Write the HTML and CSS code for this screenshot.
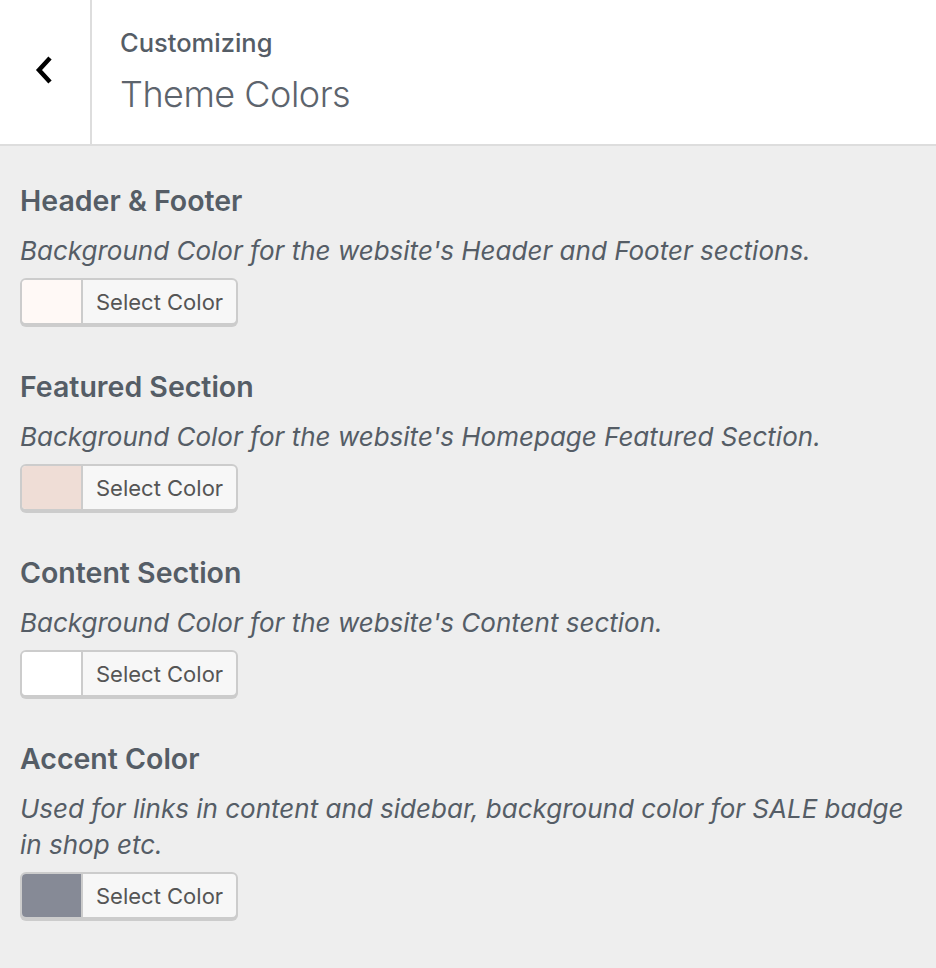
FILE: index.html
```html
<!DOCTYPE html>
<html lang="en">
<head>
  <meta charset="UTF-8" />
  <title>Customizing - Theme Colors</title>
  <link rel="stylesheet" href="styles.css">
</head>
<body>

<header class="panel-head">
  <button class="back" aria-label="Back">
    <svg width="20" height="30" viewBox="0 0 20 30"><path d="M16 3 L5 15 L16 27" fill="none" stroke="#000" stroke-width="4.5"/></svg>
  </button>
  <div class="panel-title">
    <span class="crumb">Customizing</span>
    <h1>Theme Colors</h1>
  </div>
</header>

<main class="panel-body">
  <div class="control">
    <h2>Header &amp; Footer</h2>
    <p class="desc">Background Color for the website's Header and Footer sections.</p>
    <button class="color-result"><span class="swatch" style="background:#fff9f6"></span><span class="label">Select Color</span></button>
  </div>

  <div class="control">
    <h2>Featured Section</h2>
    <p class="desc">Background Color for the website's Homepage Featured Section.</p>
    <button class="color-result"><span class="swatch" style="background:#efddd6"></span><span class="label">Select Color</span></button>
  </div>

  <div class="control">
    <h2>Content Section</h2>
    <p class="desc">Background Color for the website's Content section.</p>
    <button class="color-result"><span class="swatch" style="background:#ffffff"></span><span class="label">Select Color</span></button>
  </div>

  <div class="control">
    <h2>Accent Color</h2>
    <p class="desc">Used for links in content and sidebar, background color for SALE badge in shop etc.</p>
    <button class="color-result"><span class="swatch" style="background:#868a96"></span><span class="label">Select Color</span></button>
  </div>
</main>

</body>
</html>
```

FILE: styles.css
```css
* {
  box-sizing: border-box;
}

body {
  margin: 0;
  background: #eee;
  color: #555d66;
  font-family: Inter, "Noto Sans", sans-serif;
}

/* Cabecera */
.panel-head {
  display: flex;
  height: 146px;
  background: #fff;
  border-bottom: 2px solid #ddd;
}

.back {
  width: 92px;
  border: none;
  border-right: 2px solid #ddd;
  background: #fff;
  display: flex;
  align-items: center;
  justify-content: center;
  padding: 0 2px 4px 0;
  cursor: pointer;
}

.panel-title {
  padding: 27px 0 0 28px;
}

.crumb {
  display: block;
  font-size: 25.5px;
  line-height: 32px;
  font-weight: 500;
}

.panel-title h1 {
  margin: 13px 0 0;
  font-size: 36px;
  line-height: 44px;
  font-weight: 300;
  letter-spacing: -0.5px;
  color: #5d646d;
}

/* Controles */
.panel-body {
  padding: 37px 20px 20px;
}

.control {
  margin-bottom: 44px;
}

.control h2 {
  margin: 0;
  font-size: 28.5px;
  line-height: 36px;
  font-weight: 600;
}

.desc {
  margin: 14px 0 9px;
  font-size: 26px;
  line-height: 36px;
  font-style: italic;
}

.color-result {
  display: flex;
  height: 47px;
  width: 218px;
  padding: 0;
  border: 2px solid #ccc;
  border-radius: 6px;
  background: #f7f7f7;
  box-shadow: 0 2px 0 #ccc;
  overflow: hidden;
  font-family: inherit;
  cursor: pointer;
}

.swatch {
  width: 61px;
  height: 100%;
  border-right: 2px solid #ccc;
}

.label {
  flex: 1;
  display: flex;
  align-items: center;
  padding-left: 13px;
  font-size: 22px;
  color: #555;
}
```
